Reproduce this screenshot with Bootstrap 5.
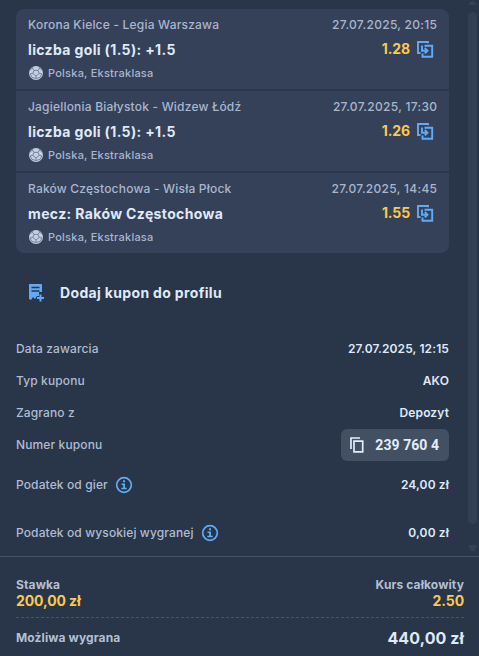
<!DOCTYPE html>
<html lang="pl">
<head>
<meta charset="utf-8">
<meta name="viewport" content="width=device-width, initial-scale=1">
<title>Kupon</title>
<link rel="stylesheet" href="https://cdn.jsdelivr.net/npm/bootstrap@5.3.0/dist/css/bootstrap.min.css">
<style>
body{font-family:Inter,sans-serif;background:#293548;color:#dfe9f8;font-size:12px;font-weight:500;line-height:18px;height:656px;overflow:hidden}
.scroll-area{height:556px;padding:9px 30px 0 16px}
.bets{background:#354159;border-radius:8px;overflow:hidden}
.bet{height:82px;padding:7px 12px 0;border-bottom:2px solid #2b374b}
.bet:last-child{height:80px;border-bottom:0}
.muted{color:#a9b6ce}
.teams{letter-spacing:.2px}
.date{letter-spacing:.3px;margin-right:-.3px}
.pick{font-size:14px;font-weight:700;line-height:24px;margin-top:4px;letter-spacing:.36px}
.odds{color:#fbc94f;font-weight:700;letter-spacing:-.1px}
.odds svg{margin:-5px 3px 0 6px}
.odds span{position:relative;top:-1px}
.league{font-size:11px;line-height:16px;margin-top:3px;letter-spacing:.23px}
.league svg{margin-right:4px}
.profile{height:24px;margin:28px 0 0 12px;font-size:14px;font-weight:700;letter-spacing:.34px}
.profile svg{margin-right:14px}
.info-row{height:32px}
.info-row b{font-weight:600;letter-spacing:.12px}
.label{color:#afbcd2;letter-spacing:.12px}
.label svg{margin-left:-.5px}
.coupon-no{width:108px;height:32px;background:#435064;border-radius:6px;padding:0 10px;font-family:Roboto,sans-serif;font-size:14px;font-weight:700;letter-spacing:.05px;color:#e2ecfa}
.coupon-no svg{margin-left:-1px}
.scroll-track{position:absolute;right:1px;top:0;width:10px;height:556px}
.scroll-track svg{display:block}
.summary{border-top:1px solid #455267;height:100px;padding:20px 15px 0 16px}
.sum-label{color:#b3bfd3;font-weight:700;line-height:16px;letter-spacing:.12px}
.gold{color:#fbc94f;font-size:14px;font-weight:700;line-height:16px;letter-spacing:-.1px}
.total{border-top:1px dashed #475469;margin-top:8px;height:40px}
.total strong{font-size:16px;font-weight:700;letter-spacing:.1px}
</style>
<script src="https://cdn.jsdelivr.net/npm/bootstrap@5.3.0/dist/js/bootstrap.bundle.min.js"></script>
</head>
<body class="position-relative">
<svg class="d-none" xmlns="http://www.w3.org/2000/svg">
<symbol id="ball" viewBox="0 0 16 16"><circle cx="8" cy="8" r="7" fill="#c3cfe2"/><g fill="none" stroke="#66748c" stroke-width=".8"><path d="M6 5.400h4l1.200 3L8 11 4.800 8.400zM6 5.400 4.300 3 5.500 1.500M10 5.400 11.700 3 10.500 1.500M11.200 8.400l2.600.4M4.800 8.400l-2.600.4M8 11v2.500M4.300 3 1.800 5.500M11.700 3l2.500 2.500M2.200 8.800l1.500 3.500M13.800 8.800l-1.500 3.500M3.700 12.300 8 13.500l4.300-1.200"/></g></symbol>
<symbol id="share" viewBox="0 0 18 18"><g fill="none" stroke="#62abf3" stroke-width="1.900"><path d="M12 3.200V2H2v11h2.500M8.500 5.800h7.700V16.700H6.500v-3.200M6 5.500v5.200h5"/><path d="m8.800 8 2.700 2.700-2.700 2.700"/></g></symbol>
<symbol id="info" viewBox="0 0 18 18"><circle cx="9" cy="9" r="7.300" fill="none" stroke="#62abf3" stroke-width="1.700"/><path d="M8 4.300h2v2H8zM6.500 7.500H10v4.200h1.700v1.600H6.300v-1.600h1.900V9.100H6.500z" fill="#62abf3"/></symbol>
</svg>

<main class="scroll-area">
  <section class="bets">
    <article class="bet">
      <div class="d-flex justify-content-between muted"><span class="teams">Korona Kielce - Legia Warszawa</span><span class="date">27.07.2025, 20:15</span></div>
      <div class="d-flex justify-content-between pick"><span>liczba goli (1.5): +1.5</span><div class="odds"><span>1.28</span><svg width="18" height="18"><use href="#share"/></svg></div></div>
      <div class="d-flex align-items-center league muted"><svg width="16" height="16"><use href="#ball"/></svg><span>Polska, Ekstraklasa</span></div>
    </article>
    <article class="bet">
      <div class="d-flex justify-content-between muted"><span class="teams">Jagiellonia Białystok - Widzew Łódź</span><span class="date">27.07.2025, 17:30</span></div>
      <div class="d-flex justify-content-between pick"><span>liczba goli (1.5): +1.5</span><div class="odds"><span>1.26</span><svg width="18" height="18"><use href="#share"/></svg></div></div>
      <div class="d-flex align-items-center league muted"><svg width="16" height="16"><use href="#ball"/></svg><span>Polska, Ekstraklasa</span></div>
    </article>
    <article class="bet">
      <div class="d-flex justify-content-between muted"><span class="teams">Raków Częstochowa - Wisła Płock</span><span class="date">27.07.2025, 14:45</span></div>
      <div class="d-flex justify-content-between pick"><span>mecz: Raków Częstochowa</span><div class="odds"><span>1.55</span><svg width="18" height="18"><use href="#share"/></svg></div></div>
      <div class="d-flex align-items-center league muted"><svg width="16" height="16"><use href="#ball"/></svg><span>Polska, Ekstraklasa</span></div>
    </article>
  </section>
  <div class="d-flex align-items-center profile">
    <svg width="18" height="20" viewBox="0 0 18 20"><path d="M1 1h12q1 0 1 1v7h-3v4H9l-2 3-2-2-2 3-2-1z" fill="#62abf3"/><path d="M3.500 4.500h8M3.500 8h8" stroke="#293548" stroke-width="1.400"/><path d="M12.500 11.500v7M9 15h7" stroke="#62abf3" stroke-width="2"/></svg>
    <span>Dodaj kupon do profilu</span>
  </div>
  <section class="details pt-4 mt-1">
    <div class="d-flex align-items-center justify-content-between info-row"><span class="label">Data zawarcia</span><b>27.07.2025, 12:15</b></div>
    <div class="d-flex align-items-center justify-content-between info-row"><span class="label">Typ kuponu</span><b>AKO</b></div>
    <div class="d-flex align-items-center justify-content-between info-row"><span class="label">Zagrano z</span><b>Depozyt</b></div>
    <div class="d-flex align-items-center justify-content-between info-row"><span class="label">Numer kuponu</span>
      <div class="d-flex align-items-center justify-content-between coupon-no"><svg width="14" height="16" viewBox="0 0 14 16" fill="none" stroke="#e2ecfa" stroke-width="1.700"><path d="M1 12V1h9"/><path d="M4 4.200h8.700v10.600H4z"/></svg><span>239 760 4</span></div>
    </div>
    <div class="d-flex align-items-center justify-content-between info-row mt-2"><span class="d-flex align-items-center gap-2 label">Podatek od gier <svg width="18" height="18"><use href="#info"/></svg></span><b>24,00 zł</b></div>
    <div class="d-flex align-items-center justify-content-between info-row mt-3"><span class="d-flex align-items-center gap-2 label">Podatek od wysokiej wygranej <svg width="18" height="18"><use href="#info"/></svg></span><b>0,00 zł</b></div>
  </section>
</main>
<div class="scroll-track"><svg width="10" height="556"><rect y="12" width="9" height="512" rx="4" fill="#313e54"/><path d="M0 5h9L6 1H3zM0 545h9l-3 6H3z" fill="#35415a"/></svg></div>
<footer class="summary">
  <div class="d-flex justify-content-between">
    <div><div class="sum-label">Stawka</div><div class="gold">200,00 zł</div></div>
    <div class="text-end"><div class="sum-label">Kurs całkowity</div><div class="gold">2.50</div></div>
  </div>
  <div class="d-flex align-items-center justify-content-between total"><span class="sum-label">Możliwa wygrana</span><strong>440,00 zł</strong></div>
</footer>
</body>
</html>
